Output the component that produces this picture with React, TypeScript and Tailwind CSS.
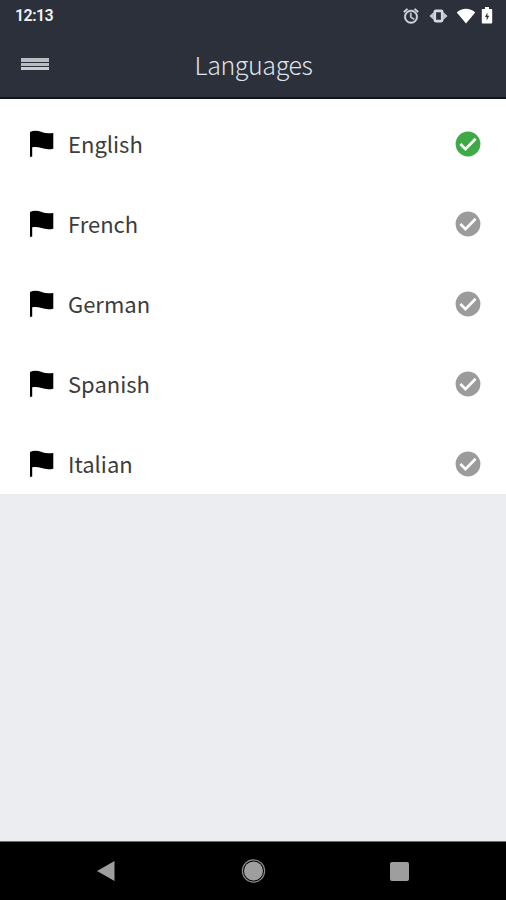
import { useState } from "react";

const idiomas = [
  { id: "en", nombre: "English" },
  { id: "fr", nombre: "French" },
  { id: "de", nombre: "German" },
  { id: "es", nombre: "Spanish" },
  { id: "it", nombre: "Italian" },
];

function StatusBar() {
  return (
    <div className="flex h-8 items-center justify-between pr-[13px] pb-px pl-[15px]">
      <span className="font-['Roboto',sans-serif] text-[16px] leading-8 font-semibold tracking-[-0.55px] text-[#f0f2fa]">
        12:13
      </span>
      <div className="flex items-center">
        <svg width="18" height="18" viewBox="0 0 24 24" fill="#d5d8e0" stroke="#d5d8e0" strokeWidth="0.6" className="mr-[9px]">
          <path d="M22 5.72l-4.6-3.86-1.29 1.53 4.6 3.86L22 5.72zM7.88 3.39L6.6 1.86 2 5.71l1.29 1.53 4.59-3.85zM12.5 8H11v6l4.75 2.85.75-1.23-4-2.37V8zM12 4a9 9 0 1 0 0 18 9 9 0 0 0 0-18zm0 16a7 7 0 1 1 0-14 7 7 0 0 1 0 14z" />
        </svg>
        <svg width="19" height="14" viewBox="0 0 19 14" className="mr-[8px]">
          <path d="M4.800 3L.4 7l4.400 4zM14.200 3l4.400 4-4.400 4z" fill="#c3c6ce" />
          <rect x="5.800" y="1.900" width="7.400" height="10.200" rx="1" fill="none" stroke="#d5d8e0" strokeWidth="2.600" />
        </svg>
        <svg width="20" height="16" viewBox="0 0 20 16" className="mr-[5px]">
          <path d="M.8 4.4C6-.4 14-.4 19.2 4.4L10 15.6z" fill="#fff" />
        </svg>
        <svg width="12" height="17" viewBox="0 0 12 17">
          <path d="M4 0h4v2h2.2c.6 0 1 .4 1 1v12.5c0 .6-.4 1-1 1H1.800c-.6 0-1-.4-1-1V3c0-.6.4-1 1-1H4z" fill="#fff" />
          <path d="M6.400 5.500L4 10h1.700v3.500L8.200 8.800H6.400z" fill="#2c303c" />
        </svg>
      </div>
    </div>
  );
}

function Bandera() {
  return (
    <svg width="26" height="28" viewBox="0 0 26 28" className="shrink-0">
      <path d="M1 2C4.500.4 9 .6 12.500 2c3.500 1.300 7.500 1.600 11.800.9v15.800c-4.300 1-8.300.6-11.800-.6-3-1-6-1.300-9.300-.8v9.500H1z" />
    </svg>
  );
}

function Check({ activo }: { activo: boolean }) {
  return (
    <svg width="26" height="26" viewBox="0 0 26 26" className={activo ? "text-[#3eaa46]" : "text-[#9b9b9b]"}>
      <circle cx="13" cy="13" r="12.400" fill="currentColor" />
      <path d="M5.400 13l5.100 5.100 10.100-10.300" fill="none" stroke="#fff" strokeWidth="2.700" />
    </svg>
  );
}

export default function App() {
  const [seleccionado, setSeleccionado] = useState("en");

  return (
    <div className="flex h-[900px] w-[506px] flex-col overflow-hidden bg-[#ecedf1] font-['Noto_Sans_CJK_SC',sans-serif]">
      <header className="h-[99px] shrink-0 border-b-2 border-[#101219] bg-[#2c303b]">
        <StatusBar />
        <div className="grid h-[65px] grid-cols-[1fr_auto_1fr] items-center px-[21px]">
          <button type="button" aria-label="Menu" className="flex w-[28px] flex-col gap-px pb-px">
            <span className="h-[4px] w-full bg-[#b9bdc2]" />
            <span className="h-[3px] w-full bg-[#b9bdc2]" />
            <span className="h-[3px] w-full bg-[#c9ccd0]" />
          </button>
          <h1 className="pb-px pl-px text-[25px] leading-8 font-light tracking-[-0.4px] text-[#dfe2e8]">Languages</h1>
        </div>
      </header>

      <ul className="h-[395px] shrink-0 overflow-hidden bg-white pt-[5px]">
        {idiomas.map((idioma) => (
          <li key={idioma.id} className="h-[79.900px]">
            <button
              type="button"
              onClick={() => setSeleccionado(idioma.id)}
              className="flex h-full w-full items-center pr-[25px] pl-[29px] text-left"
            >
              <Bandera />
              <span className="ml-[13px] flex-1 pb-px text-[22px] leading-8 text-[#3c3c3c]">{idioma.nombre}</span>
              <Check activo={idioma.id === seleccionado} />
            </button>
          </li>
        ))}
      </ul>

      <nav className="mt-auto grid h-[59px] shrink-0 grid-cols-3 items-center border-t border-[#6d6e70] bg-black px-[34px]">
        <svg width="20" height="22" viewBox="0 0 20 22" className="ml-[62px]">
          <path d="M1 11L18.500 1v20z" fill="#9e9e9e" />
        </svg>
        <svg width="26" height="26" viewBox="0 0 26 26" className="mx-auto">
          <circle cx="13.500" cy="13" r="9.500" fill="#9e9e9e" />
          <circle cx="13.500" cy="13" r="11.100" fill="none" stroke="#8e8e8e" strokeWidth="1.200" />
        </svg>
        <span className="ml-[64px] h-[19px] w-[19px] rounded-[2px] bg-[#9e9e9e]" />
      </nav>
    </div>
  );
}
